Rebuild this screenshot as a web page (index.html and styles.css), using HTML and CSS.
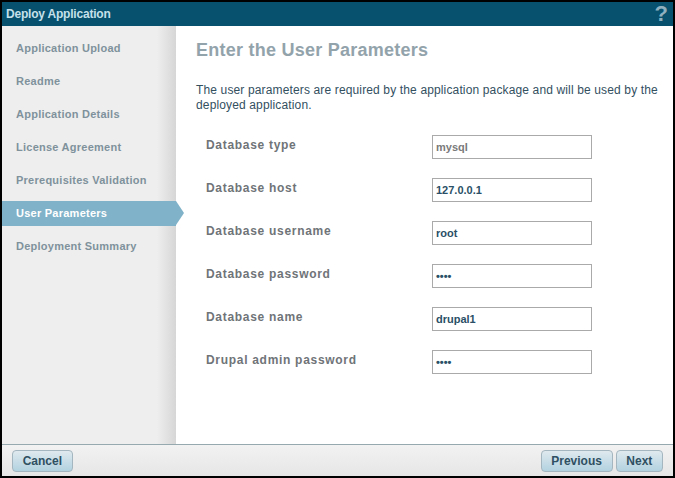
FILE: index.html
```html
<!DOCTYPE html>
<html lang="en">
<head>
<meta charset="utf-8">
<title>Deploy Application</title>
<link rel="stylesheet" href="styles.css">
</head>
<body>
<div class="dialog">
  <header class="titlebar">
    <span class="title">Deploy Application</span>
    <span class="help">?</span>
  </header>
  <div class="main">
    <nav class="sidebar">
      <div class="step">Application Upload</div>
      <div class="step">Readme</div>
      <div class="step">Application Details</div>
      <div class="step">License Agreement</div>
      <div class="step">Prerequisites Validation</div>
      <div class="step active">User Parameters</div>
      <div class="step">Deployment Summary</div>
    </nav>
    <section class="content">
      <h1 class="heading">Enter the User Parameters</h1>
      <p class="intro">The user parameters are required by the application package and will be used by the deployed application.</p>
      <div class="form">
        <div class="row"><span class="label">Database type</span><span class="field muted">mysql</span></div>
        <div class="row"><span class="label">Database host</span><span class="field">127.0.0.1</span></div>
        <div class="row"><span class="label">Database username</span><span class="field">root</span></div>
        <div class="row"><span class="label">Database password</span><span class="field dots">••••</span></div>
        <div class="row"><span class="label">Database name</span><span class="field">drupal1</span></div>
        <div class="row"><span class="label">Drupal admin password</span><span class="field dots">••••</span></div>
      </div>
    </section>
  </div>
  <footer class="footer">
    <button class="btn">Cancel</button>
    <div class="nav-btns">
      <button class="btn">Previous</button>
      <button class="btn">Next</button>
    </div>
  </footer>
</div>
</body>
</html>
```

FILE: styles.css
```css
* { box-sizing: border-box; }
html, body { margin: 0; padding: 0; }
body {
  width: 675px;
  height: 478px;
  background: #000;
  padding: 2px;
  font-family: "Liberation Sans", Arial, sans-serif;
  overflow: hidden;
}
.dialog {
  width: 671px;
  height: 474px;
  display: flex;
  flex-direction: column;
  background: #fff;
}
.titlebar {
  height: 24px;
  flex: none;
  background: #07506e;
  display: flex;
  align-items: center;
  justify-content: space-between;
  padding: 0 5px 0 4px;
}
.title { color: #c5e0ea; font-size: 12px; font-weight: bold; letter-spacing: -0.2px; }
.help { color: #8fb0bf; font-size: 22px; font-weight: bold; line-height: 24px; }
.main { flex: 1; display: flex; min-height: 0; }
.sidebar {
  width: 174px;
  flex: none;
  background: linear-gradient(to right, #eeeeee 0, #eeeeee 155px, #d6d6d6 100%);
  padding-top: 10px;
  display: flex;
  flex-direction: column;
  gap: 8px;
}
.step {
  position: relative;
  height: 25px;
  line-height: 25px;
  padding-left: 14px;
  color: #7f929c;
  font-size: 11px;
  font-weight: bold;
  letter-spacing: 0.25px;
}
.step.active { background: #80b2c9; color: #fff; }
.step.active::after {
  content: "";
  position: absolute;
  left: 100%;
  top: 0;
  border-left: 8px solid #80b2c9;
  border-top: 12.5px solid transparent;
  border-bottom: 12.5px solid transparent;
}
.content { flex: 1; padding: 13px 12px 0 20px; }
.heading { margin: 0; color: #93a3ab; font-size: 18px; line-height: 23px; font-weight: bold; letter-spacing: 0.25px; }
.intro { margin: 21px 0 0; color: #33505f; font-size: 12px; line-height: 15px; letter-spacing: 0.14px; }
.form { margin: 22px 0 0 10px; display: flex; flex-direction: column; gap: 19px; }
.row { display: flex; height: 24px; }
.label { width: 226px; color: #6f7478; font-size: 12px; font-weight: bold; letter-spacing: 0.7px; line-height: 21px; }
.field {
  width: 160px;
  height: 24px;
  border: 1px solid #aaaaaa;
  padding-left: 3px;
  color: #2a4f66;
  font-size: 11px;
  font-weight: bold;
  line-height: 22px;
}
.field.muted { color: #7a7a7a; }
.field.dots { font-size: 11px; letter-spacing: 0; }
.footer {
  height: 32px;
  flex: none;
  border-top: 1px solid #95a9af;
  background: linear-gradient(to bottom, #f2f2f2, #e6e6e6);
  display: flex;
  align-items: center;
  justify-content: space-between;
  padding: 1px 10px 0 10px;
}
.nav-btns { display: flex; gap: 3px; }
.btn {
  height: 22px;
  padding: 0 9.7px;
  border: 1px solid #a4b6bf;
  border-radius: 4px;
  background: linear-gradient(to bottom, #dfe9ee, #b2d2e0);
  color: #2f5062;
  font-family: inherit;
  font-size: 12px;
  font-weight: bold;
  line-height: 20px;
}
```
